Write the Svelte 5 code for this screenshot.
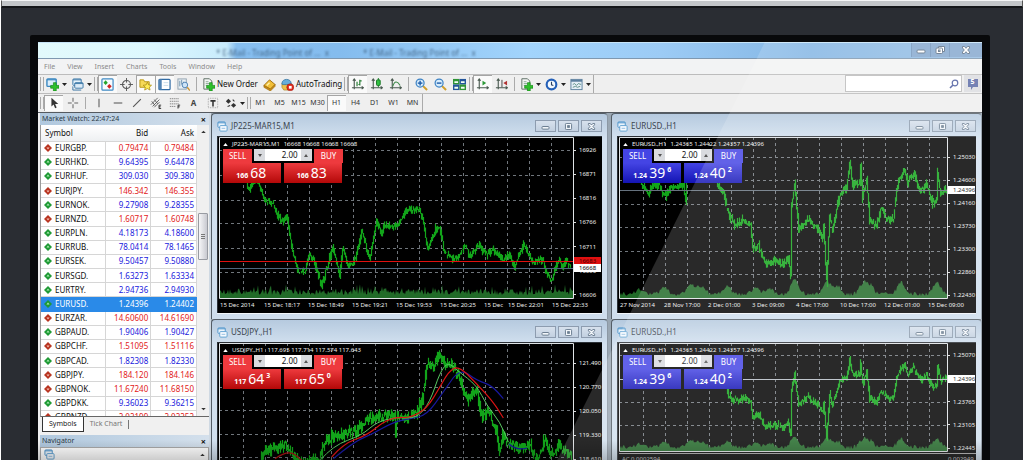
<script>
  const menu = ['File', 'View', 'Insert', 'Charts', 'Tools', 'Window', 'Help'];
  const frames = ['M1', 'M5', 'M15', 'M30', 'H1', 'H4', 'D1', 'W1', 'MN'];

  const quotes = [
    ['EURGBP.', '0.79474', '0.79484', 0],
    ['EURHKD.', '9.64395', '9.64478', 1],
    ['EURHUF.', '309.030', '309.380', 1],
    ['EURJPY.', '146.342', '146.355', 0],
    ['EURNOK.', '9.27908', '9.28355', 1],
    ['EURNZD.', '1.60717', '1.60748', 0],
    ['EURPLN.', '4.18173', '4.18600', 1],
    ['EURRUB.', '78.0414', '78.1465', 1],
    ['EURSEK.', '9.50457', '9.50880', 1],
    ['EURSGD.', '1.63273', '1.63334', 1],
    ['EURTRY.', '2.94736', '2.94930', 1],
    ['EURUSD.', '1.24396', '1.24402', 1],
    ['EURZAR.', '14.60600', '14.61690', 0],
    ['GBPAUD.', '1.90406', '1.90427', 1],
    ['GBPCHF.', '1.51095', '1.51116', 0],
    ['GBPCAD.', '1.82308', '1.82330', 1],
    ['GBPJPY.', '184.120', '184.146', 0],
    ['GBPNOK.', '11.67240', '11.68150', 0],
    ['GBPDKK.', '9.36023', '9.36215', 1],
    ['GBPNZD.', '2.02199', '2.02252', 0]
  ];

  function rng(seed) {
    let s = seed;
    return () => {
      s = (s * 16807) % 2147483647;
      return s / 2147483647;
    };
  }

  /* Turns anchor points into a run of one-unit price bars. */
  function bars(points, seed, amp) {
    const r = rng(seed);
    let d = '';
    for (let i = 0; i < points.length - 1; i++) {
      const [x0, y0] = points[i];
      const [x1, y1] = points[i + 1];
      for (let x = x0; x < x1; x++) {
        const t = (x - x0) / (x1 - x0);
        const t2 = (x + 1 - x0) / (x1 - x0);
        const a = y0 + (y1 - y0) * t + (r() - 0.5) * amp;
        const b = y0 + (y1 - y0) * t2 + (r() - 0.5) * amp;
        const hi = Math.min(a, b) - r() * amp * 0.6;
        const lo = Math.max(a, b) + r() * amp * 0.6;
        d += `M${x + 0.5} ${hi.toFixed(1)}V${lo.toFixed(1)}`;
      }
    }
    return d;
  }

  function volume(width, base, seed, humps) {
    const r = rng(seed);
    let d = `M0 ${base}`;
    for (let x = 0; x < width; x++) {
      let h = humps ? 2 + r() * 4 : 3 + r() * 6 + (r() > 0.85 ? 5 : 0);
      if (humps) for (const [c, k] of humps) h += k * Math.exp(-Math.pow((x - c) / 5, 2));
      d += `L${x} ${(base - h).toFixed(1)}`;
    }
    return d + `L${width} ${base}Z`;
  }

  const smooth = (pts) => {
    let d = `M${pts[0][0]} ${pts[0][1]}`;
    for (let i = 1; i < pts.length - 1; i++) {
      const mx = (pts[i][0] + pts[i + 1][0]) / 2;
      const my = (pts[i][1] + pts[i + 1][1]) / 2;
      d += `Q${pts[i][0]} ${pts[i][1]} ${mx} ${my}`;
    }
    const l = pts[pts.length - 1];
    return d + `L${l[0]} ${l[1]}`;
  };

  const jp = [[28,48],[31,52],[34,44],[39,44],[42,52],[46,63],[53,65],[63,85],[68,78],[74,115],[80,135],[87,132],[91,117],[95,122],[103,149],[108,132],[114,110],[121,138],[124,112],[129,127],[134,128],[138,118],[143,93],[151,122],[158,85],[163,97],[166,88],[178,90],[188,73],[201,73],[204,82],[209,112],[217,92],[221,92],[226,115],[233,122],[241,118],[246,108],[252,120],[260,108],[268,118],[274,112],[284,123],[291,118],[296,130],[305,107],[314,125],[324,122],[328,135],[333,143],[340,122],[344,130],[348,123],[352,131]];
  const eu = [[22,47],[30,56],[35,46],[39,48],[47,58],[54,50],[65,48],[67,65],[68,40],[98,40],[99,48],[105,55],[110,78],[115,87],[125,83],[132,88],[134,112],[140,108],[147,127],[154,123],[160,125],[165,128],[170,120],[172,138],[173,68],[176,47],[180,92],[187,85],[189,82],[198,90],[204,103],[205,88],[208,145],[209,125],[211,78],[214,93],[221,57],[228,50],[231,25],[234,47],[241,47],[242,30],[244,62],[248,42],[251,83],[258,90],[262,72],[269,82],[275,82],[278,55],[281,42],[286,32],[289,47],[295,35],[302,55],[308,47],[314,67],[318,65],[319,35],[322,58],[325,53],[328,53]];
  const eu2 = eu.filter(([x]) => x > 97).map(([x, y]) => [x, 17 + (y - 25) * 0.657]);
  const uj = [[42,116],[47,110],[54,106],[68,102],[74,112],[84,122],[101,116],[108,96],[118,92],[138,89],[148,76],[164,74],[176,72],[177,90],[179,70],[184,76],[198,71],[204,56],[209,19],[214,24],[221,11],[226,21],[234,22],[241,36],[249,57],[258,46],[264,76],[269,66],[278,89],[281,110],[284,92],[288,99],[301,106],[311,101],[319,118],[326,96],[333,112],[341,102],[353,116]];

  const conv = (pts) => pts.map(([x, y]) => [x / 3 - 9, y / 3 - 31]);
  const maGreen = smooth(conv([[330,445],[370,400],[455,370],[500,330],[560,315],[620,320],[660,270],[690,180],[715,150],[745,178],[800,220],[830,280],[870,330],[895,390]]));
  const maRed = smooth(conv([[365,435],[400,395],[470,370],[520,330],[560,315],[600,318],[650,290],[690,225],[715,180],[745,160],[800,215],[850,270],[880,318]]));
  const maRed2 = smooth(conv([[195,440],[235,412],[275,445]]));
  const maBlue = smooth(conv([[370,440],[430,390],[490,365],[550,330],[600,320],[650,310],[700,240],[750,168],[800,205],[845,220],[880,260]]));
  const humps = [[20,5],[45,6],[72,10],[82,8],[108,8],[137,7],[150,6],[176,16],[208,12],[218,8],[244,10],[251,9],[282,12],[318,12]];

  const charts = [
    { title: 'JP225-MAR15,M1', ohlc: '16668 16668 16668 16668', red: true, w: 355, h: 162, grid: [13,38,63,86,111,135],
      price: bars(jp, 7, 5), vol: volume(355, 161, 5, null), pad: 'near',
      labels: ['16926','16871','16816','16766','16711','16656','16606'],
      times: ['15 Dec 2014','15 Dec 18:17','15 Dec 18:49','15 Dec 19:21','15 Dec 19:53','15 Dec 20:25','15 Dec','15 Dec 22:01','15 Dec 22:33'],
      lines: [[124,'#e01010'],[131,'#50677e']], tags: [[124,'16683','hot'],[131,'16668','']],
      sell: ['166','68',''], buy: ['166','83',''] },
    { title: 'EURUSD.,H1', ohlc: '1.24365 1.24422 1.24357 1.24396', red: false, w: 329, h: 162, grid: [20,43,67,90,114,137],
      price: bars(eu, 11, 6), vol: volume(329, 161, 9, humps), pad: 'far',
      labels: ['1.25030','1.24600','1.24160','1.23730','1.23300','1.22860','1.22430'],
      times: ['27 Nov 2014','28 Nov 17:00','2 Dec 01:00','3 Dec 09:00','4 Dec 17:00','10 Dec 17:00','12 Dec 01:00','15 Dec 09:00'],
      lines: [[53,'#66727e']], tags: [[53,'1.24396','']],
      sell: ['1.24','39','6'], buy: ['1.24','40','2'] },
    { title: 'USDJPY.,H1', ohlc: '117.695 117.714 117.574 117.643', red: true, w: 355, h: 162, grid: [20,44,67,91,114,138],
      price: bars(uj, 5, 8), vol: '', pad: 'far', averages: true,
      labels: ['121.490','120.770','120.050','119.330','118.610'],
      times: [],
      lines: [], tags: [], sell: ['117','64','3'], buy: ['117','65','0'] },
    { title: 'EURUSD.,H1', ohlc: '1.24365 1.24422 1.24357 1.24396', red: false, w: 329, h: 109, grid: [12,59,82],
      price: bars(eu2, 11, 5), vol: volume(329, 108, 9, humps.map(([c, k]) => [c, k * 0.7])), pad: 'near',
      labels: ['1.25070','','1.23765','1.23105','1.22445'], times: [], sub: ['AC 0.0002594', '0.002949'],
      lines: [[36,'#b4bcc4']], tags: [[36,'1.24396','']],
      sell: ['1.24','39','6'], buy: ['1.24','40','2'] }
  ];

  const columns = Array.from({ length: 16 }, (_, i) => 24 + i * 22);
</script>

{#snippet arrow()}<svg class="drop" viewBox="0 0 5 3" aria-hidden="true"><path d="M0 0h5L2.5 3z" fill="#222" /></svg>{/snippet}

{#snippet windows()}
  <svg class="wicon" viewBox="0 0 12 12" aria-hidden="true">
    <rect x="1" y="1" width="8" height="6" rx="1" fill="#eaf4fc" stroke="#4b93c9" />
    <path d="M1 2h8" stroke="#4b93c9" />
    <rect x="3" y="5" width="8" height="6" rx="1" fill="#f6fafe" stroke="#5b9fd0" />
    <path d="M5 8h4" stroke="#8ebbe0" />
  </svg>
{/snippet}

{#snippet controls()}
  <div class="controls">
    <button aria-label="Minimize"><svg viewBox="0 0 10 8"><rect x="1" y="4" width="8" height="3" rx="1" /></svg></button>
    <button aria-label="Maximize"><svg viewBox="0 0 10 8"><rect x="1.5" y=".5" width="7" height="7" rx="1" /><rect x="4" y="3" width="2" height="2" /></svg></button>
    <button aria-label="Close"><svg viewBox="0 0 10 8"><path d="M1.5 .5h2L5 2.3 6.5 .5h2V2L6.7 4l1.8 2v1.5h-2L5 5.7 3.5 7.5h-2V6l1.8-2L1.5 2z" /></svg></button>
  </div>
{/snippet}

{#snippet axes()}<path d="M3.5 1v11M1 10.5h12M2 3l1.5-2L5 3M11.5 9l2 1.5-2 1.5" fill="none" stroke="#4a5a50" stroke-width="1.2" />{/snippet}

{#snippet icon(name)}
  <svg class="icon" viewBox="0 0 14 14" aria-hidden="true">
    {#if name === 'new'}
      <rect x="1" y="1" width="10" height="8" rx="1" fill="#dceefb" stroke="#3a87c0" stroke-width="1.5" /><path d="M1 2h10" stroke="#3a87c0" />
      <path d="M8 5h3v3h3v3h-3v3H8v-3H5V8h3z" fill="#2fc02c" stroke="#118514" stroke-width=".7" />
    {:else if name === 'profiles'}
      <rect x="2" y="1" width="9" height="7" rx="1" fill="#e5f2fb" stroke="#3976a5" /><path d="M2 2h9" stroke="#3976a5" />
      <rect x="4" y="5" width="9" height="6" rx="1" fill="#dcebf7" stroke="#3976a5" /><path d="M4 6h9M2 9v4h9" fill="none" stroke="#3976a5" />
    {:else if name === 'watch'}
      <rect x="1" y="1" width="12" height="12" rx="1" fill="#f7fbff" stroke="#3f8ac4" stroke-width="1.3" />
      <path d="M5 2.5L7.3 5 5 7.5 2.7 5z" fill="#25a52c" /><path d="M9 6.500l2.500 2.500L9 11.500 6.500 9z" fill="#d12222" />
    {:else if name === 'target'}
      <path d="M7 0v5M7 9v5M0 7h5M9 7h5" stroke="#555" /><circle cx="7" cy="7" r="4.3" fill="none" stroke="#555" stroke-width="1.1" />
    {:else if name === 'navigator'}
      <path d="M1 2h4l1 2h5v6H1z" fill="#f6d957" stroke="#b89512" /><path d="M9 4.500l1.400 3 3.100.3-2.300 2.100.7 3.100L9 11.400 6.100 13l.7-3.100-2.300-2.100 3.100-.3z" fill="#ffeb55" stroke="#a98c10" stroke-width=".8" />
    {:else if name === 'terminal'}
      <rect x="1" y="1.5" width="12" height="11" rx="1" fill="#fff" stroke="#316ca5" stroke-width="1.3" /><path d="M1 1.500h3v11H1z" fill="#5384b4" />
      <path d="M6 5h5M6 8h5" stroke="#c7dceb" />
    {:else if name === 'tester'}
      <rect x="1" y="1" width="9" height="11" fill="#eaf1f6" stroke="#8ea0ae" /><path d="M3 3v6M5 2v5M7 4v4" stroke="#6e92ae" />
      <circle cx="8.5" cy="7.5" r="3" fill="#cde4f8" stroke="#4c7fb2" /><path d="M11 10l3 3.500" stroke="#c99335" stroke-width="1.6" />
    {:else if name === 'order' || name === 'indicators'}
      <path d="M2 .8h6l2.500 2.500V12H2z" fill="#f3f5f4" stroke="#5a6b60" /><path d="M4 4h3M4 6h4M4 8h2" stroke="#8ca596" />
      <path d="M8 5h3v3h3v3h-3v3H8v-3H5V8h3z" fill="#2fc02c" stroke="#118514" stroke-width=".7" />
    {:else if name === 'editor'}
      <path d="M1 8l6-6 6 5-5 5z" fill="#f1bf38" stroke="#a06e10" /><path d="M1 8v2l7 4 5-5V7l-5 5z" fill="#c98b14" stroke="#a06e10" stroke-width=".7" /><path d="M4 8l3-3" stroke="#fff0a8" stroke-width="1.5" />
    {:else if name === 'auto'}
      <path d="M1 6h10v5l-3 2H3L1 10z" fill="#edc04a" stroke="#a9821f" stroke-width=".7" /><path d="M1 6c0-6 10-6 10 0 2 1-12 2-10 0z" fill="#67add9" stroke="#2b6d9d" stroke-width=".8" />
      <circle cx="10" cy="10" r="3.8" fill="#dd2a1c" stroke="#9d1309" stroke-width=".5" /><rect x="8.5" y="8.5" width="3" height="3" fill="#fff" />
    {:else if name === 'bars'}
      {@render axes()}<path d="M6.500 4v5M9.500 2v6M9.500 3h2M8 7h1.500" stroke="#2c8138" stroke-width="1.3" />
    {:else if name === 'candles'}
      {@render axes()}<rect x="7" y="2" width="4" height="6" rx="1" fill="#30c040" stroke="#147522" /><path d="M9 0v2M9 8v2" stroke="#147522" />
    {:else if name === 'line'}
      {@render axes()}<path d="M4 9c2-6 5-6 8-1" fill="none" stroke="#3b8a48" stroke-width="1.2" />
    {:else if name === 'in' || name === 'out'}
      <path d="M8.500 8.500l4.500 4.500" stroke="#d1a02c" stroke-width="2.2" /><circle cx="5.5" cy="5.5" r="4.3" fill="#d8edfc" stroke="#3c82c4" stroke-width="1.3" />
      <path d="M3 5.500h5" stroke="#1d5aa8" stroke-width="1.5" />{#if name === 'in'}<path d="M5.500 3v5" stroke="#1d5aa8" stroke-width="1.5" />{/if}
    {:else if name === 'tile'}
      <rect x="0" y="1" width="7" height="6" fill="#2f9436" /><rect x="7" y="1" width="7" height="6" fill="#23559b" /><rect x="0" y="7" width="7" height="6" fill="#23559b" /><rect x="7" y="7" width="7" height="6" fill="#2f9436" />
      <path d="M1.500 4.500h4M8.500 4.500h4M1.500 10.500h4M8.500 10.500h4" stroke="#f2fff2" stroke-width="2" />
    {:else if name === 'scroll'}
      {@render axes()}<path d="M7 3l4 2.500L7 8z" fill="#2c9a38" />
    {:else if name === 'shift'}
      {@render axes()}<path d="M7.500 2v8" stroke="#444" /><path d="M13 3L9 5.500 13 8z" fill="#b23333" />
    {:else if name === 'clock'}
      <circle cx="7" cy="7" r="5.2" fill="#f4faff" stroke="#2460b8" stroke-width="2.3" /><path d="M7 4v3.300l2 .7" fill="none" stroke="#2c4060" stroke-width="1.2" />
    {:else if name === 'template'}
      <rect x="1" y="1.5" width="12" height="11" fill="#e4eef6" stroke="#5b7f9e" /><path d="M1 3h12" stroke="#5b7f9e" stroke-width="2" /><path d="M3 7l2-1 2 2 2-2 3 1M3 10l3-1 2 1 3-1" fill="none" stroke="#5e8f86" />
    {:else if name === 'cursor'}
      <path d="M4 1v10l2.500-2.300L8.300 13l1.800-.8-1.800-4H12z" fill="#333" />
    {:else if name === 'cross'}
      <path d="M7 1v4.500M7 8.500V13M1 7h4.500M8.500 7H13" stroke="#666" stroke-width="1.2" />
    {:else if name === 'vertical'}
      <path d="M7 2v10" stroke="#555" stroke-width="1.2" />
    {:else if name === 'horizontal'}
      <path d="M2 7h10" stroke="#555" stroke-width="1.2" />
    {:else if name === 'trend'}
      <path d="M2.500 11.500l9-9" stroke="#555" stroke-width="1.2" />
    {:else if name === 'channel'}
      <path d="M1 9l8-8M3 11l8-8M5 12l6-6M2 5l4 5M5 3l4 5" stroke="#555" /><path d="M13 9.500h-2.500v4H13M10.500 11.500h2" fill="none" stroke="#222" />
    {:else if name === 'fibo'}
      <path d="M1 2h11M1 5h11M1 8h11M1 11h7" stroke="#777" stroke-dasharray="1.5 .7" /><path d="M13 9.500h-2.500v4M10.500 11.500h2" fill="none" stroke="#222" />
    {:else if name === 'label'}
      <rect x="1.5" y="1.5" width="11" height="11" fill="none" stroke="#999" stroke-dasharray="1 1" /><path d="M4 4.500h6M7 4v7" stroke="#333" stroke-width="1.8" />
    {:else if name === 'arrows'}
      <path d="M4 2l3 3-3 3-3-3z" fill="#333" /><path d="M10 7l3 2.500-3 3-3-3z" fill="#333" /><path d="M6 10l-3 1M9 3l2 2" stroke="#333" stroke-width="1.3" />
    {/if}
  </svg>
{/snippet}

{#snippet tool(name, label, pressed = false)}
  <button class="tool" class:pressed aria-label={label}>{@render icon(name)}</button>
{/snippet}
{#snippet dropTool(name, label)}
  <button class="tool wide" aria-label={label}>{@render icon(name)}{@render arrow()}</button>
{/snippet}

<div class="device">
  <div class="lid"></div>
  <div class="bezel">
    <main class="screen">
      <header class="titlebar">
        <div class="ghosts"><span>* E-Mail - Trading Point of ...&nbsp; x</span><span>* E-Mail - Trading Point of ...&nbsp; x</span></div>
        <div class="syscontrols">
          <button aria-label="Minimize application"><svg viewBox="0 0 10 8"><rect x="1" y="4" width="8" height="3" rx="1" /></svg></button>
          <button aria-label="Restore application"><svg viewBox="0 0 10 8"><path d="M3.5 2V.5h6v5H8" /><rect x="1" y="2" width="6.5" height="5.5" rx="1" /><rect x="3.5" y="4" width="1.5" height="1.5" /></svg></button>
          <button class="close" aria-label="Close application"><svg viewBox="0 0 10 8"><path d="M1.5 .5h2L5 2.3 6.5 .5h2V2L6.7 4l1.8 2v1.5h-2L5 5.7 3.5 7.5h-2V6l1.8-2L1.5 2z" /></svg></button>
        </div>
      </header>

      <nav class="menu">
        {#each menu as item}<button>{item}</button>{/each}
      </nav>

      <div class="toolrow">
        <div class="bar">
          <i class="grip"></i>
          {@render dropTool('new', 'New chart')}
          {@render dropTool('profiles', 'Profiles')}
          <i class="grip"></i>
          {@render tool('watch', 'Market Watch', true)}
          {@render tool('target', 'Data window')}
          {@render tool('navigator', 'Navigator panel', true)}
          {@render tool('terminal', 'Terminal', true)}
          {@render tool('tester', 'Strategy tester')}
          <i class="sep"></i>
          <button class="tool text">{@render icon('order')}New Order</button>
          {@render tool('editor', 'Editor')}
          <button class="tool text">{@render icon('auto')}AutoTrading</button>
          <i class="grip"></i>
          {@render tool('bars', 'Bar chart', true)}
          {@render tool('candles', 'Candlesticks')}
          {@render tool('line', 'Line chart')}
          <i class="sep"></i>
          {@render tool('in', 'Zoom in')}
          {@render tool('out', 'Zoom out')}
          {@render tool('tile', 'Tile windows')}
          <i class="grip"></i>
          {@render tool('scroll', 'Auto scroll', true)}
          {@render tool('shift', 'Chart shift')}
          <i class="sep"></i>
          {@render dropTool('indicators', 'Indicators')}
          {@render dropTool('clock', 'Periods')}
          {@render dropTool('template', 'Templates')}
        </div>
        <div class="search">
          <input aria-label="Search" />
          <svg viewBox="0 0 10 10" aria-hidden="true"><circle cx="6" cy="4" r="2.8" fill="none" stroke="#4a5a9e" stroke-width="1.2" /><path d="M4 6L1 9" stroke="#4a5a9e" stroke-width="1.6" /></svg>
        </div>
        <button class="chat" aria-label="Messages, 5 unread"><svg viewBox="0 0 12 12"><path d="M1 1h10v8H6l-2 3V9H1z" fill="#5b6aa6" /></svg><span>5</span></button>
      </div>

      <div class="toolrow second">
        <div class="bar">
          <i class="grip"></i>
          {@render tool('cursor', 'Cursor', true)}
          {@render tool('cross', 'Crosshair')}
          <i class="sep"></i>
          {@render tool('vertical', 'Vertical line')}
          {@render tool('horizontal', 'Horizontal line')}
          {@render tool('trend', 'Trendline')}
          {@render tool('channel', 'Equidistant channel')}
          {@render tool('fibo', 'Fibonacci retracement')}
          <button class="tool letter">A</button>
          {@render tool('label', 'Text label')}
          {@render dropTool('arrows', 'Arrows')}
          <i class="grip"></i>
          {#each frames as f}<button class="tool frame" class:pressed={f === 'H1'}>{f}</button>{/each}
        </div>
      </div>

      <div class="workspace">
        <aside>
          <div class="panelhead"><span>Market Watch: 22:47:24</span><button aria-label="Close Market Watch">×</button></div>
          <div class="watch">
            <div class="tableclip">
              <table>
                <thead><tr><th>Symbol</th><th>Bid</th><th>Ask</th></tr></thead>
                <tbody>
                  {#each quotes as [s, bid, ask, up]}
                    <tr class:up class:selected={s === 'EURUSD.'}>
                      <td><svg viewBox="0 0 8 8" aria-hidden="true"><path d="M4 0l4 4-4 4-4-4z" fill={up ? '#1f9a35' : '#b83420'} /><path d={up ? 'M4 2.5l1.500 2h-3z' : 'M4 5.5l1.500-2h-3z'} fill={up ? '#b4f0b8' : '#f6c4b8'} /></svg>{s}</td>
                      <td>{bid}</td><td>{ask}</td>
                    </tr>
                  {/each}
                </tbody>
              </table>
            </div>
            <div class="scroll" aria-hidden="true"><svg viewBox="0 0 6 4"><path d="M0 4l3-3 3 3z" /></svg><i></i><svg viewBox="0 0 6 4"><path d="M0 0l3 3 3-3z" /></svg></div>
          </div>
          <div class="tabs"><button class="active">Symbols</button><button>Tick Chart</button><i></i></div>
          <div class="panelhead"><span>Navigator</span><button aria-label="Close Navigator">×</button></div>
          <div class="tree">{@render windows()}<svg class="treeup" viewBox="0 0 6 4" aria-hidden="true"><path d="M0 4l3-3 3 3z" /></svg></div>
        </aside>

        <div class="mdi">
          {#each charts as c, n}
            <section class="window">
              <div class="wtitle">{@render windows()}<h2>{c.title}</h2>{@render controls()}</div>
              <div class="chart">
                <div class="plotrow">
                  <svg class="plot" class:short={c.sub} viewBox="0 0 {c.w} {c.h}" preserveAspectRatio="none" role="img" aria-label={c.title}>
                    <g stroke="#8d949b" stroke-width="1" stroke-dasharray="3 3" opacity=".8">
                      {#each columns.filter((x) => x < c.w - 2) as x}<path d="M{x + 0.5} 0V{c.h}" />{/each}
                      {#each c.grid as y}<path d="M0 {y + 0.5}H{c.w}" />{/each}
                    </g>
                    {#if c.vol}<path d={c.vol} fill="#216b28" />{/if}
                    <path d={c.price} stroke="#12a51a" stroke-width="1.2" fill="none" />
                    {#each c.lines as [y, color]}<path d="M0 {y + 0.5}H{c.w}" stroke={color} stroke-width="1" />{/each}
                    {#if c.averages}
                      <g fill="none" stroke-width="1.2"><path d={maBlue} stroke="#1818a0" /><path d="M290 101Q298 108 308 105" stroke="#1818a0" /><path d={maGreen} stroke="#58c862" stroke-width="1" /><path d={maRed} stroke="#dc1414" /><path d={maRed2} stroke="#a81414" /></g>
                    {/if}
                    <path d="M.5 {c.h - 0.5}V.5H{c.w - 0.5}V{c.h - 0.5}z" fill="none" stroke="#dfe3e6" />
                  </svg>
                  <div class="axis {c.pad}">
                    {#each c.labels as l}<span class:blank={!l}>{l}</span>{/each}
                    {#each c.tags as [y, t, kind]}<b class={kind} style="top: {(y / c.h) * 100}%">{t}</b>{/each}
                  </div>
                </div>
                {#if c.sub}
                  <div class="sub"><span>{c.sub[0]}</span><span>{c.sub[1]}</span></div>
                {:else}
                  <div class="times" class:dense={n === 0}>{#each c.times as t}<span>{t}</span>{/each}</div>
                {/if}

                <div class="overlay">
                  <p><svg viewBox="0 0 6 4" aria-hidden="true"><path d="M0 4l3-4 3 4z" fill="#fff" /></svg><span>{c.title}</span><span>{c.ohlc}</span></p>
                  <div class="deal" class:red={c.red}>
                    <button class="word">SELL</button>
                    <div class="lots"><button aria-label="Decrease volume"><svg viewBox="0 0 4 3"><path d="M0 0h4L2 3z" /></svg></button><input aria-label="Volume" value="2.00" /><button aria-label="Increase volume"><svg viewBox="0 0 4 3"><path d="M0 3h4L2 0z" /></svg></button></div>
                    <button class="word">BUY</button>
                    <button class="quote">{c.sell[0]}<strong>{c.sell[1]}</strong><sup>{c.sell[2]}</sup></button>
                    <button class="quote">{c.buy[0]}<strong>{c.buy[1]}</strong><sup>{c.buy[2]}</sup></button>
                  </div>
                </div>
              </div>
            </section>
          {/each}
        </div>
      </div>
      <div class="glare"></div>
      <div class="fade"></div>
    </main>
  </div>
</div>

<style>
  :global(body) { background: #fff; }
  .device, .device * { box-sizing: border-box; }
  .device {
    height: 100vh;
    overflow: hidden;
    margin: 0 1px;
    background: #2a2d33;
    display: flex;
    flex-direction: column;
    font: 7px/10px "Noto Sans", "Open Sans", sans-serif;
    color: #222;
  }
  button { font: inherit; color: inherit; border: 0; background: none; padding: 0; margin: 0; }
  svg { display: block; flex: none; }
  .lid { flex: none; height: 8px; border: solid #555; border-width: 1px; border-top-color: #f4f5f6; border-bottom: 2px solid #15171a; background: #c3c6c9; }
  .bezel { flex: 1; min-height: 0; margin: 27px 33px 0 29px; padding: 7px 8px 0; background: #08090b; border-radius: 2px 2px 0 0; }
  .screen { position: relative; height: 100%; overflow: hidden; background: #f0f0f0; display: flex; flex-direction: column; }

  .titlebar { flex: none; height: 17px; display: flex; justify-content: space-between; border-top: 1px solid #c7e4f7; border-bottom: 1px solid #7f98b0; background: linear-gradient(90deg, #e2fafc 0, #ddf8fe 12%, #c8ebfc 20%, #86bef0 21%, #84bcee 32%, #a2d4fc 52%, #9ccbf5 66%, #84b6e4 82%, #98bfe4 100%); }
  .ghosts { display: flex; gap: 34px; padding: 5px 0 0 178px; filter: blur(1px); color: #31506e; font-size: 8px; white-space: nowrap; opacity: .8; }
  .syscontrols { display: flex; height: 14px; background: #86a9cf; }
  .syscontrols button { width: 19px; display: grid; place-items: center; border-left: 1px solid #7395bb; }
  .syscontrols .close { width: 33px; }
  .syscontrols svg, .controls svg { width: 10px; height: 8px; fill: #fff; stroke: #5d7186; stroke-width: 1; }

  .menu { flex: none; height: 15px; display: flex; background: #f2f3f4; }
  .menu button { padding: 0 6px; color: #8a8a8a; line-height: 15px; }

  .toolrow { flex: none; height: 19px; display: flex; justify-content: space-between; align-items: stretch; border-top: 1px solid #bcbcbc; padding: 0 1px 0 2px; background: #efefef; }
  .second { border-bottom: 1px solid #555a60; height: 20px; }
  .bar { display: flex; align-items: stretch; border-right: 1px solid #aaa; }
  .second .bar { padding: 1px 0; }
  .tool { width: 19px; display: flex; align-items: center; justify-content: center; gap: 2px; }
  .tool.wide { width: 25px; gap: 3px; }
  .tool.text { width: auto; font-size: 8px; padding: 0 2px; gap: 2px; color: #111; white-space: nowrap; }
  .tool.pressed { background: #fafafa; box-shadow: inset 1px 1px 0 #a5a5a5; }
  .tool.letter { font-weight: bold; font-size: 8px; color: #444; }
  .tool.frame { color: #333; }
  .icon { width: 13px; height: 13px; }
  .second .icon { width: 12px; height: 12px; }
  .drop { width: 5px; height: 3px; }
  .grip { flex: none; width: 4px; margin: 2px 0; border: solid #aaa; border-width: 0 1px; }
  .sep { flex: none; width: 1px; margin: 2px 3px; background: #aaa; }
  .search { margin: 0 2px 0 auto; width: 117px; height: 17px; border: 1px solid #bbb; background: #fff; display: flex; align-items: center; padding-right: 2px; }
  .search input { flex: 1; min-width: 0; border: 0; background: none; outline: 0; }
  .search svg { width: 10px; height: 10px; }
  .chat { width: 17px; height: 17px; background: #dcdde0; display: grid; place-items: center; }
  .chat > * { grid-area: 1 / 1; }
  .chat svg { width: 12px; height: 12px; }
  .chat span { color: #fff; font-weight: bold; line-height: 8px; padding-bottom: 3px; }

  .workspace { flex: 1; min-height: 0; display: flex; background: #cfd9e3; }
  aside { flex: none; width: 171px; padding-left: 2px; background: #f0f0f0; }
  .panelhead { height: 12px; display: flex; justify-content: space-between; align-items: center; background: linear-gradient(90deg, #b0c8de, #d4e0ec); padding: 0 3px 0 2px; color: #2c3a46; }
  .panelhead button { font-size: 9px; font-weight: bold; color: #111; line-height: 9px; }
  .watch { height: 292px; display: flex; border-left: 1px solid #999; border-bottom: 1px solid #666; background: #fff; }
  .tableclip { flex: 1; height: 291px; overflow: hidden; }
  table { width: 100%; height: 300px; border-collapse: collapse; table-layout: fixed; }
  thead tr { height: 16px; background: linear-gradient(#fff, #eef0f2); }
  th, td { padding: 0 2px; text-align: right; border-right: 1px solid #d6d6d6; border-bottom: 1px solid #d6d6d6; line-height: 10px; white-space: nowrap; font-size: 8px; font-weight: 400; }
  td { color: #e22020; }
  th { border-right-color: transparent; color: #111; }
  th:first-child { width: 64px; text-align: left; padding-left: 4px; }
  td:first-child { text-align: left; color: #111; padding-left: 3px; }
  td svg { display: inline-block; width: 8px; height: 8px; margin-right: 3px; vertical-align: -1px; }
  .up td { color: #2020dc; }
  .up td:first-child { color: #111; }
  tr.selected td, tr.selected td:first-child { color: #fff; background: #2a8ae8; border-color: #2a8ae8; }
  .scroll { width: 12px; background: #f0f0f0; display: flex; flex-direction: column; align-items: center; padding: 5px 0; }
  .scroll svg, .treeup { width: 5px; height: 3px; fill: #333; }
  .scroll i { width: 10px; height: 47px; margin: 80px 0 auto; border: 1px solid #989ba2; border-radius: 1px; background: linear-gradient(#777, #777) center 20px / 4px 1px no-repeat, linear-gradient(#777, #777) center 22px / 4px 1px no-repeat, linear-gradient(#777, #777) center 24px / 4px 1px no-repeat, linear-gradient(90deg, #f6f6f8, #c8c9d0); }
  .tabs { height: 18px; display: flex; align-items: flex-start; padding-left: 2px; color: #777; }
  .tabs button { line-height: 14px; padding: 0 6px; }
  .tabs .active { color: #222; background: #fff; border: solid #333; border-width: 0 1px 1px; }
  .tabs i { width: 1px; height: 9px; margin-top: 3px; background: #777; }
  .tree { height: 30px; background: #fff; border: 1px solid #aaa; display: flex; align-items: flex-start; justify-content: space-between; padding: 1px 3px; }
  .treeup { margin-top: 4px; }

  .mdi { flex: 1; min-width: 0; margin-left: 2px; display: grid; grid-template-columns: 397fr 371fr; column-gap: 3px; align-content: start; background: #9aa7b3; }
  .window { min-width: 0; height: 206px; padding: 0 5px 6px; border: 1px solid #545d66; border-right-color: #8c98a4; border-bottom: 0; border-radius: 4px 4px 0 0; background: linear-gradient(#b6cadf, #d4e2f0 26px, #cfdeed); }
  .wtitle { height: 22px; display: flex; align-items: center; gap: 3px; padding-top: 2px; }
  .wicon { width: 11px; height: 11px; }
  h2 { margin: 0 auto 0 0; font-size: 8px; font-weight: 400; line-height: 12px; color: #3c4650; }
  .controls { display: flex; gap: 2px; }
  .controls button { width: 21px; height: 12px; display: grid; place-items: center; border: 1px solid #8d9caf; background: linear-gradient(#d7e1ed, #c2d0e0); }
  .controls svg { width: 9px; height: 7px; fill: #f2f6fa; }
  .chart { position: relative; height: 177px; background: #000; border: solid #2b3036; border-width: 1px 0 0 1px; box-shadow: 0 1px 0 #f1f5f9; padding-left: 1px; color: #eee; font-size: 6px; line-height: 8px; overflow: hidden; }
  .plotrow { display: grid; grid-template-columns: 1fr 28px; }
  .plot { width: 100%; height: 162px; }
  .plot.short { height: 109px; }
  .axis { position: relative; display: flex; flex-direction: column; justify-content: space-between; }
  .axis.near { padding-top: 9px; }
  .axis.far { padding-top: 16px; }
  .window:nth-child(3) .axis { justify-content: flex-start; gap: 16px; }
  .short + .axis { padding: 8px 0 0; }
  .axis span { display: flex; align-items: center; gap: 3px; }
  .axis span::before { content: ""; width: 2px; height: 1px; background: #ddd; }
  .axis .blank { height: 8px; visibility: hidden; }
  .axis b { position: absolute; left: 0; right: 1px; height: 8px; margin-top: -4px; padding-left: 5px; background: #fff; color: #000; font-weight: 400; }
  .axis b.hot { background: #e01010; color: #400; }
  .times { display: flex; padding-left: 1px; line-height: 13px; }
  .times span { flex: none; width: 44px; white-space: nowrap; }
  .times.dense span:nth-child(7) { width: 24px; }
  .sub { display: grid; grid-template-columns: 1fr 28px; margin-top: 1px; border-top: 1px solid #aaa; padding: 1px 0 0 3px; color: #ccc; height: 50px; }
  .overlay { position: absolute; left: 5px; top: 2px; width: 120px; }
  .overlay p { margin: 0; display: flex; align-items: center; gap: 4px; white-space: nowrap; line-height: 10px; }
  .overlay p svg { width: 5px; height: 3px; }
  .deal { --a: #4444e4; --b: #1414b4; display: grid; grid-template-columns: 29px 29px 29px 29px; column-gap: 1px; color: #fff; background: #000; justify-content: space-between; }
  .deal.red { --a: #ee3a3e; --b: #b40808; }
  .word { height: 14px; background: var(--a); line-height: 14px; font-size: 8px; }
  .lots { grid-column: span 2; height: 12px; margin: 0 1px; display: flex; background: #fff; }
  .lots button { width: 11px; background: #d9dbdf; display: grid; place-items: center; }
  .lots svg { width: 4px; height: 3px; fill: #555; }
  .lots input { flex: 1; min-width: 0; border: 0; padding: 0 3px 0 0; outline: 0; text-align: right; font: 8px/12px "Noto Sans", sans-serif; color: #111; background: #fff; }
  .quote { grid-column: span 2; height: 20px; display: flex; justify-content: center; align-items: baseline; gap: 2px; font-size: 7px; font-weight: bold; line-height: 19px; background: linear-gradient(var(--a), var(--b)); margin-right: 1px; }
  .quote strong { font-size: 14px; font-weight: 400; }
  .quote sup { font-size: 7px; line-height: 7px; align-self: flex-start; padding-top: 3px; }

  .glare { position: absolute; inset: 0; pointer-events: none; background: rgba(255, 255, 255, .16); clip-path: polygon(77% 0, 100% 0, 100% 100%, 55% 100%); }
  .fade { position: absolute; inset: auto 0 0; height: 20px; pointer-events: none; background: linear-gradient(transparent, rgba(0, 0, 0, .2)); }
</style>
